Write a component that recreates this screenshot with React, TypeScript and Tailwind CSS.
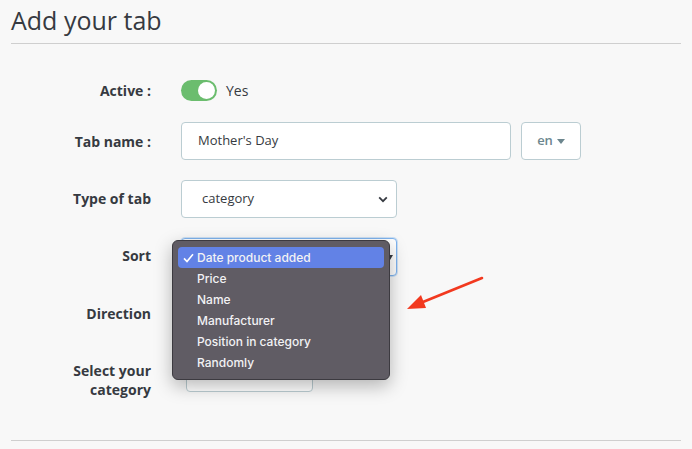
import React from 'react';

const labelCls =
  'w-[140px] shrink-0 text-right text-[14px] font-bold leading-[19px] text-[#363a41]';

function Chevron() {
  return (
    <svg width="10" height="7" viewBox="0 0 10 7" className="shrink-0">
      <path d="M1.2 1.4 L5 5.2 L8.8 1.4" fill="none" stroke="#363a41" strokeWidth="1.8" />
    </svg>
  );
}

const sortOptions = [
  'Date product added',
  'Price',
  'Name',
  'Manufacturer',
  'Position in category',
  'Randomly',
];

function SortMenu() {
  return (
    <div className="absolute left-[-9px] top-[2px] z-10 flex w-[218px] flex-col rounded-[6px] border border-[#3c3a40] bg-[#605c64] px-[5px] py-[6px] shadow-[0_6px_18px_rgba(0,0,0,0.28)] font-['Inter','Liberation_Sans',sans-serif]">
      {sortOptions.map((opt, i) => (
        <div
          key={opt}
          className={
            'flex h-[21px] items-center rounded-[4px] text-[12px] font-medium text-[#f2f2f4] ' +
            (i === 0 ? 'bg-[#6282e6]' : '')
          }
        >
          <span className="flex w-[19px] justify-center pl-[2px]">
            {i === 0 && (
              <svg width="11" height="10" viewBox="0 0 11 10">
                <path d="M1 5.4 L4 8.6 L10 1.2" fill="none" stroke="#fff" strokeWidth="1.6" />
              </svg>
            )}
          </span>
          <span>{opt}</span>
        </div>
      ))}
    </div>
  );
}

export default function App() {
  return (
    <div className="relative min-h-[449px] w-[692px] overflow-hidden bg-[#f8f8f8] px-[11px] font-['Open_Sans','Liberation_Sans',sans-serif]">
      <h1 className="pt-[3px] text-[25px] font-normal leading-[35px] text-[#363a41]">Add your tab</h1>
      <div className="mt-[5px] h-px bg-[#cfcfcf]" />

      <div className="flex flex-col">
        {/* Active */}
        <div className="mt-[35px] flex h-[22px] items-center gap-[30px]">
          <div className={labelCls}>Active :</div>
          <div className="flex items-center gap-[9px]">
            <div className="flex h-[21px] w-[36px] items-center justify-end rounded-full bg-[#6bbd6e] pr-[2px]">
              <div className="h-[17px] w-[17px] rounded-full bg-white" />
            </div>
            <span className="text-[14px] text-[#363a41]">Yes</span>
          </div>
        </div>

        {/* Tab name */}
        <div className="mt-[21px] flex h-[38px] items-center gap-[30px]">
          <div className={labelCls}>Tab name :</div>
          <div className="flex h-full items-center gap-[10px]">
            <div className="flex h-full w-[330px] items-center rounded-[4px] border border-[#bbcdd2] bg-white px-[16px] text-[13px] text-[#363a41]">
              Mother's Day
            </div>
            <div className="flex h-full w-[60px] items-center justify-center gap-[4px] rounded-[4px] border border-[#bbcdd2] bg-white text-[13px] font-semibold text-[#6c868e]">
              en
              <svg width="8" height="5" viewBox="0 0 8 5">
                <path d="M0 0 H8 L4 5 Z" fill="#6c868e" />
              </svg>
            </div>
          </div>
        </div>

        {/* Type of tab */}
        <div className="mt-[20px] flex h-[38px] items-center gap-[30px]">
          <div className={labelCls + ' -mt-[2px]'}>Type of tab</div>
          <div className="flex h-full w-[216px] items-center justify-between rounded-[4px] border border-[#bbcdd2] bg-white pl-[20px] pr-[8px] text-[13px] text-[#363a41]">
            category
            <Chevron />
          </div>
        </div>

        {/* Sort */}
        <div className="mt-[20px] flex h-[38px] items-center gap-[30px]">
          <div className={labelCls + ' -mt-[4px]'}>Sort</div>
          <div className="relative h-full w-[216px]">
            <div className="flex h-full w-full items-center justify-end rounded-[4px] border border-[#7fb4ef] bg-white pr-[3px] shadow-[0_0_0_1px_rgba(127,180,239,0.35)]">
              <svg width="6" height="5" viewBox="0 0 6 5">
                <path d="M0 0 H6 L3 5 Z" fill="#363a41" />
              </svg>
            </div>
            <SortMenu />
          </div>
        </div>

        {/* Direction */}
        <div className="mt-[20px] flex h-[38px] items-center gap-[30px]">
          <div className={labelCls + ' -mt-[4px]'}>Direction</div>
          <div className="h-full w-[200px] rounded-[4px] border border-[#bbcdd2] bg-white" />
        </div>

        {/* Category */}
        <div className="mt-[20px] flex items-start gap-[30px]">
          <div className={labelCls + ' mt-[7px]'}>
            Select your
            <br />
            category
          </div>
          <div className="ml-[5px] h-[38px] w-[127px] rounded-[4px] border border-[#bbcdd2] bg-white" />
        </div>
      </div>

      <div className="mt-[41px] h-px bg-[#cfcfcf]" />

      <svg
        className="pointer-events-none absolute left-[400px] top-[270px]"
        width="90"
        height="45"
        viewBox="0 0 90 45"
      >
        <path d="M82 8 L18 34" stroke="#f2391f" strokeWidth="2.6" strokeLinecap="round" />
        <path d="M7 39 L21 25 L26 38 Z" fill="#f2391f" />
      </svg>
    </div>
  );
}
